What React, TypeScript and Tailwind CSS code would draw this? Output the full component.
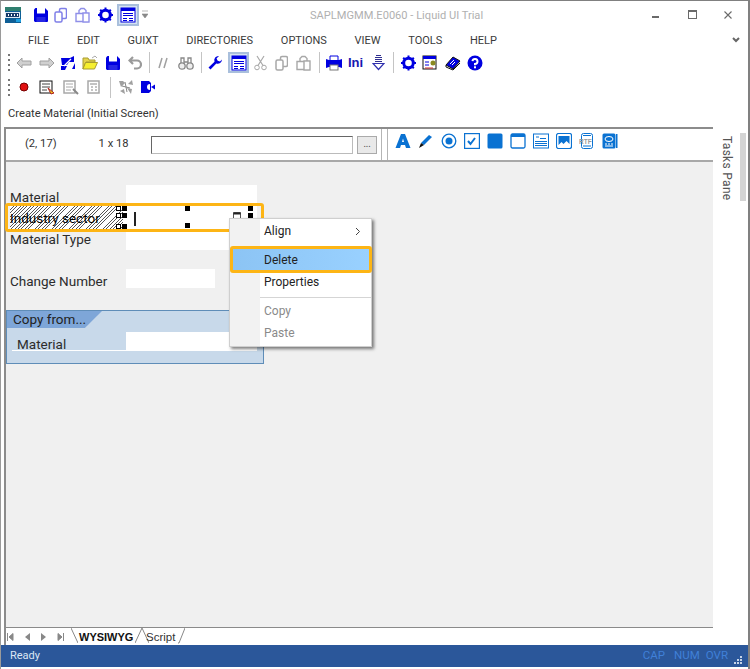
import type { ReactNode } from 'react'

const font = { menu: "font-['Roboto',sans-serif]" }

function Ico({ w = 16, h = 16, ml = 0, children }: { w?: number; h?: number; ml?: number; children: ReactNode }) {
  return (
    <svg width={w} height={h} viewBox={`0 0 ${w} ${h}`} style={{ marginLeft: ml }} className="shrink-0 block">
      {children}
    </svg>
  )
}

const BLUE = '#0000e0'
const GREY = '#a8a8a8'

const Save = ({ ml = 0, c = BLUE }: { ml?: number; c?: string }) => (
  <Ico ml={ml}>
    <path d="M1 2.5 2.5 1H12l3 3v10.500L14 15H2l-1-1z" fill={c} />
    <rect x="4" y="1" width="8" height="5.500" fill="#fff" />
    <rect x="3.500" y="10" width="9" height="5" fill="#fff" opacity="0.15" />
  </Ico>
)

const CopyIco = ({ ml = 0, c = GREY }: { ml?: number; c?: string }) => (
  <Ico w={13} ml={ml}>
    <rect x="5.500" y="1.500" width="7" height="10" rx="1.500" fill="none" stroke={c} strokeWidth="1.500" />
    <rect x="1" y="5" width="7" height="10" rx="1.500" fill="#fff" stroke={c} strokeWidth="1.500" />
  </Ico>
)

const PasteIco = ({ ml = 0, c = GREY }: { ml?: number; c?: string }) => (
  <Ico w={15} ml={ml}>
    <path d="M4 6V3.500L6 1.500h3L11 3.500V6M1 6.500h12V14.500H1z" fill="none" stroke={c} strokeWidth="1.400" />
    <rect x="8" y="6" width="6" height="9" fill="#fff" stroke={c} strokeWidth="1.400" />
  </Ico>
)

const Gear = ({ ml = 0 }: { ml?: number }) => (
  <Ico w={15} ml={ml}>
    <circle cx="7.500" cy="8" r="4.800" fill="none" stroke={BLUE} strokeWidth="3" />
    <path d="M7.500 0.500v3M7.500 12.500v3M0 8h3M12 8h3M2.200 2.700l2 2M10.800 11.300l2 2M12.800 2.700l-2 2M4.200 11.300l-2 2" stroke={BLUE} strokeWidth="2" />
  </Ico>
)

const ScreenIco = ({ c = BLUE }: { c?: string }) => (
  <Ico w={16} h={16}>
    <rect x="1" y="1" width="14" height="14" fill="#fff" stroke={c} strokeWidth="1" />
    <rect x="1" y="1" width="14" height="3" fill={c} />
    <path d="M3 6.500h10M3 8.500h10M3 11.500h4M9 11.500h4M3 13.500h4M9 13.500h4" stroke={c} strokeWidth="1" />
  </Ico>
)

const Selected = ({ ml = 0, s = 22 }: { ml?: number; s?: number }) => (
  <div style={{ marginLeft: ml, width: s, height: s }} className="shrink-0 flex items-center justify-center bg-[#d5e2f2] border-2 border-[#a9bfdc]">
    <ScreenIco />
  </div>
)

const Sep = ({ ml = 0, h = 'h-[21px]' }: { ml?: number; h?: string }) => (
  <div style={{ marginLeft: ml }} className={`w-px shrink-0 bg-[#c4c4c4] ${h}`} />
)

const Grip = () => (
  <div className="flex flex-col gap-[3px] ml-[7px] shrink-0">
    <div className="w-[2px] h-[2px] bg-[#777]" />
    <div className="w-[2px] h-[2px] bg-[#777]" />
    <div className="w-[2px] h-[2px] bg-[#777]" />
    <div className="w-[2px] h-[2px] bg-[#777]" />
  </div>
)

function TitleBar() {
  return (
    <div className="h-[27px] flex items-center relative">
      <Ico ml={4} h={16}>
        <rect width="16" height="16" fill="#0f5f96" />
        <path d="M0 0h16v4H0z" fill="#2f7f6f" />
        <rect y="5" width="15" height="6" fill="#dfeaf4" />
        <rect y="6" x="1" width="13" height="4" fill="#163a6a" />
        <path d="M3 7h1v2H3zM6 7h1v2H6zM9 7h1v2H9zM12 7h1v2h-1z" fill="#fff" />
        <rect x="11" y="12" width="5" height="3" fill="#1fa0e0" />
      </Ico>
      <Save ml={12} />
      <CopyIco ml={5} c="#7f7fe8" />
      <PasteIco ml={8} c="#8f8fe8" />
      <Gear ml={8} />
      <Selected ml={4} />
      <svg width="6" height="9" viewBox="0 0 6 9" className="ml-[3px]">
        <path d="M0 1h6M0 4h6l-3 4z" fill="#888" stroke="#888" strokeWidth="0.600" />
      </svg>
      <div className={`${font.menu} absolute left-[309px] top-[7px] text-[11.100px] leading-[16px] text-[#b0b0b0] whitespace-nowrap`}>
        SAPLMGMM.E0060 - Liquid UI Trial
      </div>
      <div className="ml-auto flex items-center">
        <div className="w-[7px] h-[2px] bg-[#6a6a6a] mt-[5px]" />
        <div className="w-[9px] h-[9px] border border-t-2 border-[#6a6a6a] ml-[29px]" />
        <svg width="8" height="8" viewBox="0 0 8 8" className="ml-[27px] mr-[16px]">
          <path d="M0.500 0.500l7 7M7.500 0.500l-7 7" stroke="#6a6a6a" strokeWidth="1.100" />
        </svg>
      </div>
    </div>
  )
}

function MenuBar() {
  const items = ['FILE', 'EDIT', 'GUIXT', 'DIRECTORIES', 'OPTIONS', 'VIEW', 'TOOLS', 'HELP']
  return (
    <div className={`${font.menu} h-[24px] pl-[27px] pt-[2px] flex items-center gap-[27.700px] text-[11px] text-[#3a3a3a] relative`}>
      {items.map(t => (
        <span key={t} className="whitespace-nowrap">{t}</span>
      ))}
      <svg width="8" height="6" viewBox="0 0 8 6" className="absolute right-[8px] top-[9px]">
        <path d="M1 1l3 3 3-3" fill="none" stroke="#666" strokeWidth="2" />
      </svg>
    </div>
  )
}

function ToolbarOne() {
  return (
    <div className="h-[21px] flex items-center">
      <Grip />
      <Ico ml={6}>
        <path d="M1 8l5-5v3h9v4H6v3z" fill="#d0d0d0" stroke="#a0a0a0" />
      </Ico>
      <Ico ml={7}>
        <path d="M15 8l-5-5v3H1v4h9v3z" fill="#d0d0d0" stroke="#a0a0a0" />
      </Ico>
      <Ico ml={5}>
        <path d="M1 3h9l4-2v6H9l-2 3H2z" fill={BLUE} />
        <path d="M3 14h9l3-6v6zM1 11h6l-2 4H1z" fill={BLUE} />
        <path d="M4 11l7-7M8 13l5-5" stroke="#fff" strokeWidth="1.300" />
      </Ico>
      <Ico ml={6}>
        <path d="M1 3h5l1 2h6v2H4l-3 7z" fill="#e5d44e" stroke="#a89c30" />
        <path d="M3.500 7.500H15.500l-3 6.500H1z" fill="#f6ef2f" stroke="#a89c30" />
        <path d="M10 3l3-2 2 2" fill="none" stroke="#aaa" />
      </Ico>
      <Save ml={7} />
      <Ico ml={7} w={14}>
        <path d="M5 2L1.500 5.500 5 9M2 5.500h7a4 4 0 0 1 0 8H6" fill="none" stroke="#9a9a9a" strokeWidth="2.200" />
      </Ico>
      <Sep ml={7} />
      <svg width="10" height="12" viewBox="0 0 10 12" className="ml-[8px] shrink-0">
        <path d="M4 1L1 11M9 1L6 11" stroke="#a0a0a0" strokeWidth="1.500" />
      </svg>
      <Ico ml={10}>
        <circle cx="4" cy="11" r="3.200" fill="#eee" stroke="#888" strokeWidth="1.300" />
        <circle cx="12" cy="11" r="3.200" fill="#eee" stroke="#888" strokeWidth="1.300" />
        <path d="M3 8V3h3v5M10 8V3h3v5M6 7h4" fill="none" stroke="#888" strokeWidth="1.300" />
      </Ico>
      <Sep ml={7} />
      <Ico ml={5}>
        <path d="M15 4.500a4.300 4.300 0 0 1-5.700 4L3.500 14.500 1.500 12.500l6-5.800A4.300 4.300 0 0 1 12 1L9.500 3.500l1.200 2.300 2.300.7z" fill={BLUE} />
      </Ico>
      <Selected ml={5} s={21} />
      <Ico w={13} ml={5}>
        <circle cx="3" cy="12.500" r="2.300" fill="none" stroke={GREY} />
        <circle cx="10" cy="12.500" r="2.300" fill="none" stroke={GREY} />
        <path d="M4 10.500L10 1M9 10.500L3 1" stroke={GREY} strokeWidth="1.200" />
      </Ico>
      <CopyIco ml={8} />
      <PasteIco ml={8} />
      <Sep ml={8} />
      <Ico ml={6}>
        <path d="M4 1h8v5H4z" fill="#fff" stroke={BLUE} />
        <path d="M0 4l3 1h10l3-1v9l-3-1H3l-3 1z" fill={BLUE} />
        <rect x="4" y="10" width="8" height="5" fill="#fff" stroke="#777" />
      </Ico>
      <span className="ml-[6px] w-[17px] shrink-0 font-['Liberation_Sans',sans-serif] font-bold text-[13px] leading-[16px] text-[#1818b0]">Ini</span>
      <Ico w={13} ml={7}>
        <path d="M4 0.500h5M3 2.500h7M3 4.500h7M3 6.500h7" stroke="#303090" />
        <path d="M1 8.500h11L6.500 14.500z" fill="#fff" stroke="#3030b0" strokeWidth="1.200" />
      </Ico>
      <Sep ml={8} />
      <Gear ml={7} />
      <Ico ml={6}>
        <rect x="1" y="1" width="13" height="13" fill="#fff" stroke="#111" />
        <rect x="1" y="1" width="13" height="3" fill={BLUE} />
        <path d="M3 7h4M3 10h4" stroke={BLUE} />
        <circle cx="11" cy="8" r="2.500" fill="#8a8a20" />
        <path d="M3 13h8" stroke="#d03030" />
      </Ico>
      <Ico ml={7}>
        <path d="M1 10l7-8 7 4-7 8z" fill={BLUE} stroke="#111" />
        <path d="M1 10v2l7 3 7-7" fill="none" stroke="#111" />
        <path d="M5 9l4-4M7 10l3-3" stroke="#fff" />
      </Ico>
      <Ico ml={6}>
        <circle cx="8" cy="8" r="7.500" fill={BLUE} />
        <path d="M5.500 6.200A2.500 2.500 0 1 1 8 9v1.200" fill="none" stroke="#fff" strokeWidth="2" />
        <rect x="7" y="11.300" width="2" height="2" fill="#fff" />
      </Ico>
    </div>
  )
}

function ToolbarTwo() {
  return (
    <div className="h-[20px] flex items-center mt-[4px]">
      <Grip />
      <Ico ml={8} w={12}>
        <circle cx="6" cy="8" r="4" fill="#e01010" stroke="#700" />
      </Ico>
      <Ico ml={9}>
        <rect x="1" y="2" width="12" height="12" fill="#fff" stroke="#111" />
        <path d="M3 5h8M3 8h8M3 11h5" stroke="#444" />
        <path d="M9 9l6 5-3 1z" fill="#f2d020" stroke="#b02020" />
      </Ico>
      <Ico ml={8}>
        <rect x="1" y="2" width="11" height="12" fill="#fff" stroke={GREY} strokeWidth="1.500" />
        <path d="M3 5h7M3 8h7M3 11h5" stroke={GREY} />
        <path d="M10 10l5 5" stroke="#888" strokeWidth="2" />
      </Ico>
      <Ico ml={8} w={14}>
        <rect x="1" y="2" width="11" height="12" fill="#fff" stroke={GREY} strokeWidth="1.500" />
        <path d="M3 5h7M4 8h2M8 8h2M4 11h2M8 11h2" stroke="#888" />
      </Ico>
      <Sep ml={9} />
      <Ico ml={7}>
        <path d="M1 2h4l2 2-4 4zM14 1l1 5-5-1zM2 12l5 3-1-5zM9 9l5 1-1 5z" fill="#a0a0a0" />
        <path d="M4 7l8 2M7 3l2 10" stroke="#888" />
      </Ico>
      <Ico ml={6}>
        <path d="M1 2h8l2 2v8l-2 2H1z" fill={BLUE} />
        <path d="M11 8l4-2.500v5z" fill={BLUE} />
        <path d="M7 8a3 3 0 0 1 3-3v6a3 3 0 0 1-3-3z" fill="#fff" />
      </Ico>
    </div>
  )
}

const EI = ({ children, ml = 7 }: { children: ReactNode; ml?: number }) => <Ico ml={ml}>{children}</Ico>
const B = '#0a72d2'

function EditorBar() {
  return (
    <div className="h-[33px] flex items-stretch bg-white border-b-2 border-[#a8a8a8]">
      <div className={`${font.menu} w-[145px] flex items-center text-[11.200px] text-[#333]`}>
        <span className="ml-[19px]">(2, 17)</span>
        <span className="ml-[42px] whitespace-nowrap">1 x 18</span>
      </div>
      <div className="flex items-center">
        <div className="w-[202px] h-[18px] bg-white border border-[#bbb] border-l-[#666] border-t-[#666]" />
        <div className="w-[20px] h-[18px] ml-[4px] bg-[#e9e9e9] border border-[#aaa] text-[9px] leading-[14px] text-center text-[#444]">...</div>
      </div>
      <div className="ml-[4px] w-[7px] border-x border-[#b5b5b5]" />
      <div className="flex items-start pt-[4px]">
        <EI>
          <path d="M0.500 15L6 1h4l5.500 14H11l-1-3H6l-1 3zM7 9h2L8 5.500z" fill={B} />
        </EI>
        <EI>
          <path d="M3 10l8-8 3 2-8 8z" fill={B} />
          <path d="M1 15l2-5 3 2z" fill="#111" />
        </EI>
        <EI>
          <circle cx="8" cy="8" r="6.800" fill="none" stroke={B} strokeWidth="1.300" />
          <circle cx="8" cy="8" r="3.500" fill={B} />
        </EI>
        <EI>
          <rect x="0.500" y="0.500" width="15" height="15" fill="#fff" stroke={B} strokeWidth="1.400" />
          <path d="M4 8l2.500 3L11 5" fill="none" stroke={B} strokeWidth="2" />
        </EI>
        <EI>
          <rect x="0.500" y="0.500" width="15" height="15" rx="1.500" fill={B} />
        </EI>
        <EI>
          <rect x="1" y="1" width="14" height="14" rx="1.500" fill="#fff" stroke={B} strokeWidth="1.300" />
          <rect x="1" y="1" width="14" height="3" fill={B} />
        </EI>
        <EI>
          <rect x="0.500" y="1" width="15" height="14" fill="#fff" stroke={B} />
          <path d="M3 4h3M7 5.500h6M2 8.500h12M2 10.500h12M2 12.500h12" stroke={B} />
        </EI>
        <EI>
          <rect x="0.500" y="0.500" width="15" height="15" rx="2" fill="#fff" stroke={B} strokeWidth="1.200" />
          <path d="M2.500 3h11v8l-3-3-3 3-2-2-3 3z" fill={B} />
        </EI>
        <EI>
          <rect x="2.500" y="0.500" width="11" height="15" rx="2" fill="#fff" stroke={B} />
          <path d="M4 13h8M4 2.500h8" stroke={B} />
          <text x="0" y="10.500" fontSize="6.500" fontWeight="700" fontFamily="Liberation Sans" fill="#9a9a9a">RTF</text>
        </EI>
        <EI>
          <rect x="0.500" y="0.500" width="13" height="15" rx="1.500" fill={B} />
          <rect x="14" y="1" width="1.500" height="14" fill={B} />
          <ellipse cx="7" cy="6" rx="4" ry="2.500" fill="none" stroke="#fff" />
          <path d="M3 11h2M6 11h2M9 11h2M3 13h8" stroke="#fff" />
        </EI>
      </div>
    </div>
  )
}

function Handle({ x, y, hollow }: { x: string; y: string; hollow?: boolean }) {
  return <div className={`absolute w-[5px] h-[5px] ${x} ${y} ${hollow ? 'bg-white border border-black' : 'bg-black'}`} />
}

function Label({ className, children }: { className: string; children: ReactNode }) {
  return <div className={`${font.menu} absolute text-[13.500px] leading-[16px] text-[#2c2c2c] whitespace-nowrap ${className}`}>{children}</div>
}

function Canvas() {
  return (
    <div className="relative flex-1 bg-[#f0f0f0]">
      <div className="absolute left-[120px] top-[23px] w-[131px] h-[22px] bg-white" />
      <Label className="left-[4px] top-[27px]">Material</Label>

      <Label className="left-[4px] top-[69px]">Material Type</Label>
      <div className="absolute left-[120px] top-[69px] w-[131px] h-[19px] bg-white" />
      <Label className="left-[4px] top-[111px]">Change Number</Label>
      <div className="absolute left-[120px] top-[107px] w-[89px] h-[19px] bg-white" />

      {/* group box */}
      <div className="absolute left-0 top-[148px] w-[258px] h-[54px] bg-[#c8d9ea] border border-[#5f8db8]">
        <div className={`${font.menu} h-[17px] w-[95px] pl-[6px] bg-[#7ea6d8] text-[13.500px] leading-[16px] text-[#222] [clip-path:polygon(0_0,100%_0,82%_100%,0_100%)]`}>
          Copy from...
        </div>
        <Label className="left-[10px] top-[25px]">Material</Label>
        <div className="absolute left-[119px] top-[21px] w-[131px] h-[19px] bg-white" />
        <div className="absolute left-[5px] top-[39px] w-[115px] h-px bg-white" />
      </div>

      {/* selected field */}
      <div className="absolute left-[4px] top-[44px] w-[113px] h-[23px] bg-[repeating-linear-gradient(135deg,#555_0,#555_0.6px,#fff_0.6px,#fff_2.4px)]">
        <Label className="left-0 top-[4px] !text-black">Industry sector</Label>
      </div>
      <div className="absolute left-[117px] top-[44px] w-[134px] h-[23px] bg-white">
        <div className="absolute left-[11px] top-[6px] w-[2px] h-[14px] bg-[#222]" />
        <svg width="8" height="7" viewBox="0 0 8 7" className="absolute left-[110px] top-[6px]">
          <path d="M0.500 0.500h7v6h-7z" fill="#fff" stroke="#555" />
          <path d="M0.500 0.500h7v2h-7z" fill="#222" />
        </svg>
      </div>
      <Handle x="left-[110px]" y="top-[44px]" hollow />
      <Handle x="left-[116px]" y="top-[44px]" />
      <Handle x="left-[110px]" y="top-[51px]" hollow />
      <Handle x="left-[116px]" y="top-[51px]" />
      <Handle x="left-[110px]" y="top-[62px]" hollow />
      <Handle x="left-[116px]" y="top-[62px]" />
      <Handle x="left-[179px]" y="top-[44px]" />
      <Handle x="left-[179px]" y="top-[61px]" />
      <Handle x="left-[242px]" y="top-[44px]" />
      <Handle x="left-[242px]" y="top-[51px]" />
      <div className="absolute left-[-1px] top-[41px] w-[259px] h-[29px] border-[3px] border-[#fdb515] rounded-[3px]" />

      {/* context menu */}
      <div className={`${font.menu} absolute left-[223px] top-[56px] w-[143px] h-[129px] bg-white border border-[#cfcfcf] shadow-[2px_2px_3px_rgba(0,0,0,0.5)] text-[12px] text-[#222]`}>
        <div className="absolute left-0 top-0 bottom-0 w-[30px] bg-[#f2f2f2]" />
        <div className="absolute left-[34px] top-[4px] leading-[17px]">Align</div>
        <svg width="6" height="9" viewBox="0 0 6 9" className="absolute right-[10px] top-[8px]">
          <path d="M1 1l3.500 3.500L1 8" fill="none" stroke="#444" />
        </svg>
        <div className="absolute left-0 top-[27px] w-[142px] h-[27px] bg-[linear-gradient(90deg,#8cc4f4,#99d1ff)] border-[3px] border-[#fdb515] rounded-[3px]" />
        <div className="absolute left-[34px] top-[33px] leading-[17px]">Delete</div>
        <div className="absolute left-[34px] top-[55px] leading-[17px]">Properties</div>
        <div className="absolute left-[30px] right-0 top-[78px] h-px bg-[#d5d5d5]" />
        <div className="absolute left-[34px] top-[84px] leading-[17px] text-[#8a8a8a]">Copy</div>
        <div className="absolute left-[34px] top-[106px] leading-[17px] text-[#8a8a8a]">Paste</div>
      </div>
    </div>
  )
}

function TabStrip() {
  return (
    <div className="h-[18px] flex items-center bg-white border-t border-[#8a8a8a]">
      <div className="flex items-center text-[#8a8a8a] w-[65px] shrink-0">
        <svg width="7" height="8" viewBox="0 0 7 8" className="ml-[1px]"><path d="M0.500 0v8M6 0.500v7L2 4z" stroke="#888" fill="#888" /></svg>
        <svg width="5" height="8" viewBox="0 0 5 8" className="ml-[11px]"><path d="M5 0v8L0 4z" fill="#888" /></svg>
        <svg width="5" height="8" viewBox="0 0 5 8" className="ml-[11px]"><path d="M0 0v8l5-4z" fill="#888" /></svg>
        <svg width="7" height="8" viewBox="0 0 7 8" className="ml-[11px]"><path d="M6.500 0v8M1 0.500v7L5 4z" stroke="#888" fill="#888" /></svg>
      </div>
      <div className="flex items-center relative h-full">
        <svg width="7" height="17" viewBox="0 0 7 17" className="shrink-0"><path d="M0 0l7 15" stroke="#888" fill="none" /></svg>
        <span className="font-['Liberation_Sans',sans-serif] font-bold text-[11px] leading-[16px] text-[#111] ml-[1px] w-[56px] whitespace-nowrap">WYSIWYG</span>
        <svg width="14" height="17" viewBox="0 0 14 17" className="shrink-0"><path d="M0 15L7 0l7 15" stroke="#888" fill="none" /></svg>
        <span className="font-['Liberation_Sans',sans-serif] text-[11.500px] leading-[16px] text-[#333] ml-[-3px] w-[32px]">Script</span>
        <svg width="7" height="17" viewBox="0 0 7 17" className="shrink-0"><path d="M0 15h1L7 0" stroke="#888" fill="none" /></svg>
      </div>
    </div>
  )
}

function TasksPane() {
  return (
    <div className="w-[35px] shrink-0 bg-white relative">
      <div className={`${font.menu} absolute left-[6px] top-[9px] text-[12px] leading-[16px] text-[#555] tracking-[0.3px] whitespace-nowrap [writing-mode:vertical-rl]`}>
        Tasks Pane
      </div>
      <div className="absolute left-[27px] top-[6px] w-[6px] h-[68px] bg-[#d4d4d4]" />
    </div>
  )
}

function StatusBar() {
  return (
    <div className={`${font.menu} h-[22px] shrink-0 bg-[#2b579a] flex items-center text-[11.500px] relative`}>
      <span className="ml-[9px] text-[11px] text-[#dce6f4]">Ready</span>
      <div className="ml-auto mr-[20px] flex text-[#4080d8]">
        <span>CAP</span>
        <span className="ml-[9px]">NUM</span>
        <span className="ml-[6px]">OVR</span>
      </div>
      <svg width="8" height="8" viewBox="0 0 8 8" className="absolute right-[6px] bottom-[3px]">
        <path d="M6 0h2v2H6zM3 3h2v2H3zM6 3h2v2H6zM0 6h2v2H0zM3 6h2v2H3zM6 6h2v2H6z" fill="#c5d3e8" />
      </svg>
    </div>
  )
}

export default function App() {
  return (
    <div className="w-[750px] h-[669px] bg-white flex flex-col overflow-hidden border-t border-[#808080] border-r-2 border-r-[#808080] border-l border-l-[#9a9a9a]">
      <div className="flex-1 flex flex-col min-h-0">
        <TitleBar />
        <MenuBar />
        <ToolbarOne />
        <ToolbarTwo />
        <div className={`${font.menu} h-[30px] pt-[9px] pl-[7px] text-[11.200px] leading-[16px] text-[#333]`}>Create Material (Initial Screen)</div>
        <div className="flex-1 min-h-0 flex">
          <div className="flex-1 min-w-0 flex flex-col ml-[3px] border-l-[2px] border-t-[2px] border-[#8c8c8c]">
            <EditorBar />
            <Canvas />
            <TabStrip />
          </div>
          <TasksPane />
        </div>
      </div>
      <StatusBar />
      <div className="h-[2px] shrink-0 bg-white" />
    </div>
  )
}
